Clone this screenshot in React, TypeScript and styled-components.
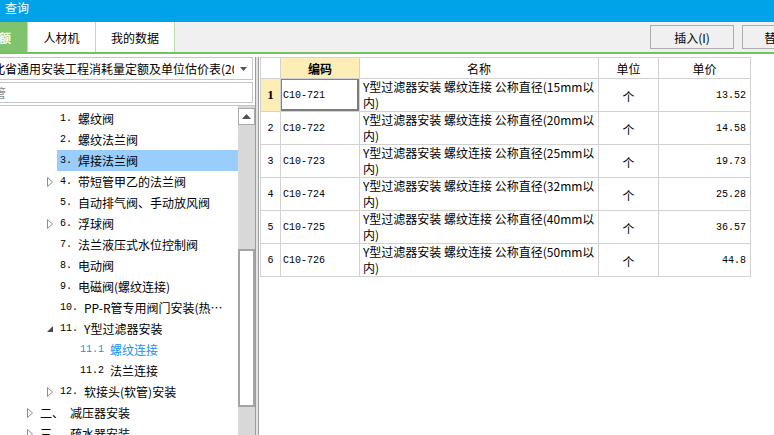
import styled, { createGlobalStyle } from "styled-components";

const GlobalStyle = createGlobalStyle`
  html, body {
    margin: 0;
    padding: 0;
    overflow: hidden;
  }
  body {
    font-family: "Noto Sans CJK SC", "Noto Sans", sans-serif;
    font-size: 12px;
    color: #000;
    background: #fff;
  }
`;

type Toggle = "open" | "closed";

interface TreeItem {
    level: number;
    num: string;
    text: string;
    toggle?: Toggle;
    selected?: boolean;
    active?: boolean;
}

const treeRows: TreeItem[] = [
    { level: 2, num: "1.", text: "螺纹阀" },
    { level: 2, num: "2.", text: "螺纹法兰阀" },
    { level: 2, num: "3.", text: "焊接法兰阀", selected: true },
    { level: 2, num: "4.", text: "带短管甲乙的法兰阀", toggle: "closed" },
    { level: 2, num: "5.", text: "自动排气阀、手动放风阀" },
    { level: 2, num: "6.", text: "浮球阀", toggle: "closed" },
    { level: 2, num: "7.", text: "法兰液压式水位控制阀" },
    { level: 2, num: "8.", text: "电动阀" },
    { level: 2, num: "9.", text: "电磁阀(螺纹连接)" },
    { level: 2, num: "10.", text: "PP-R管专用阀门安装(热熔连接)" },
    { level: 2, num: "11.", text: "Y型过滤器安装", toggle: "open" },
    { level: 3, num: "11.1", text: "螺纹连接", active: true },
    { level: 3, num: "11.2", text: "法兰连接" },
    { level: 2, num: "12.", text: "软接头(软管)安装", toggle: "closed" },
    { level: 1, num: "二、", text: "减压器安装", toggle: "closed" },
    { level: 1, num: "三、", text: "疏水器安装", toggle: "closed" },
];

const quotaRows = [
    { code: "C10-721", size: "15", price: "13.52" },
    { code: "C10-722", size: "20", price: "14.58" },
    { code: "C10-723", size: "25", price: "19.73" },
    { code: "C10-724", size: "32", price: "25.28" },
    { code: "C10-725", size: "40", price: "36.57" },
    { code: "C10-726", size: "50", price: "44.8" },
];

const TreeToggle = ({ state }: { state?: Toggle }) => {
    if (state === "closed") {
        return (
            <svg width="7" height="10" viewBox="0 0 7 10">
                <polygon points="0.5,0.5 5.5,5 0.5,9.5" fill="#fff" stroke="#8e8e8e" strokeWidth="1" />
            </svg>
        );
    }
    if (state === "open") {
        return (
            <svg width="7" height="10" viewBox="0 0 7 10">
                <polygon points="6,2 6,8 0,8" fill="#4a4a4a" />
            </svg>
        );
    }
    return null;
};

const App = () => {
    return (
        <Window>
            <GlobalStyle />
            <TitleBar>查询</TitleBar>

            <Toolbar>
                <Tabs>
                    <Tab $active $width={28}>定额</Tab>
                    <Tab $width={68}>人材机</Tab>
                    <Tab $width={79}>我的数据</Tab>
                </Tabs>
                <Actions>
                    <ActionButton>插入(I)</ActionButton>
                    <ActionButton>替换(R)</ActionButton>
                </Actions>
            </Toolbar>

            <Body>
                <LeftPanel>
                    <Select>
                        <SelectText>湖北省通用安装工程消耗量定额及单位估价表(2013)</SelectText>
                        <SelectArrow>
                            <svg width="7" height="4" viewBox="0 0 7 4">
                                <polygon points="0,0 7,0 3.5,4" fill="#555" />
                            </svg>
                        </SelectArrow>
                    </Select>
                    <SearchBox>
                        <SearchText>管</SearchText>
                    </SearchBox>

                    <TreeView>
                        <TreeList>
                            {treeRows.map((row) => (
                                <TreeRow key={row.num} $level={row.level}>
                                    <ToggleSlot>
                                        <TreeToggle state={row.toggle} />
                                    </ToggleSlot>
                                    <TreeLabel $selected={row.selected} $active={row.active}>
                                        <TreeNum $cjk={/[^\x00-\x7f]/.test(row.num)}>{row.num}</TreeNum>
                                        <TreeText>{row.text}</TreeText>
                                    </TreeLabel>
                                </TreeRow>
                            ))}
                        </TreeList>
                        <ScrollBar>
                            <ScrollButton>
                                <svg width="9" height="5" viewBox="0 0 9 5">
                                    <polygon points="0,5 9,5 4.5,0" fill="#505050" />
                                </svg>
                            </ScrollButton>
                            <ScrollThumb />
                        </ScrollBar>
                    </TreeView>
                </LeftPanel>

                <Splitter />

                <RightPanel>
                    <Grid>
                        <colgroup>
                            <col style={{ width: 20 }} />
                            <col style={{ width: 79 }} />
                            <col style={{ width: 239 }} />
                            <col style={{ width: 60 }} />
                            <col style={{ width: 92 }} />
                        </colgroup>
                        <thead>
                            <tr>
                                <HeadCell />
                                <HeadCell $current>编码</HeadCell>
                                <HeadCell>名称</HeadCell>
                                <HeadCell>单位</HeadCell>
                                <HeadCell>单价</HeadCell>
                            </tr>
                        </thead>
                        <tbody>
                            {quotaRows.map((row, i) => (
                                <tr key={row.code}>
                                    <IndexCell $current={i === 0}>{i + 1}</IndexCell>
                                    <CodeCell $focused={i === 0}>{row.code}</CodeCell>
                                    <NameCell>
                                        <NameLine>Y型过滤器安装 螺纹连接 公称直径({row.size}mm以</NameLine>
                                        <NameLine>内)</NameLine>
                                    </NameCell>
                                    <UnitCell>个</UnitCell>
                                    <PriceCell>{row.price}</PriceCell>
                                </tr>
                            ))}
                        </tbody>
                    </Grid>
                </RightPanel>
            </Body>
        </Window>
    );
};

export default App;

const Window = styled.div`
    width: 774px;
    height: 435px;
    display: flex;
    flex-direction: column;
    overflow: hidden;
`;

const TitleBar = styled.div`
    height: 22px;
    flex-shrink: 0;
    background: #00a2e8;
    color: #fff;
    font-size: 12px;
    line-height: 15px;
    padding-left: 5px;
`;

const Toolbar = styled.div`
    height: 30px;
    flex-shrink: 0;
    display: flex;
    align-items: stretch;
    background: #f0f0f0;
    border-bottom: 2px solid #74c162;
`;

const Tabs = styled.div`
    display: flex;
`;

const Tab = styled.div<{ $active?: boolean; $width: number }>`
    width: ${(p) => p.$width}px;
    display: flex;
    align-items: center;
    justify-content: ${(p) => (p.$active ? "flex-end" : "center")};
    padding-right: ${(p) => (p.$active ? "16px" : "0")};
    overflow: hidden;
    white-space: nowrap;
    box-sizing: border-box;
    background: ${(p) => (p.$active ? "#7fc46c" : "#fff")};
    color: ${(p) => (p.$active ? "#fff" : "#000")};
    font-weight: ${(p) => (p.$active ? 700 : 400)};
    border-right: 1px solid #b9dfac;
`;

const Actions = styled.div`
    margin-left: auto;
    margin-right: -52px;
    display: flex;
    align-items: center;
    gap: 8px;
`;

const ActionButton = styled.div`
    width: 84px;
    height: 24px;
    box-sizing: border-box;
    border: 1px solid #adadad;
    background: #f0f0f0;
    display: flex;
    align-items: center;
    justify-content: center;
`;

const Body = styled.div`
    flex: 1;
    display: flex;
    min-height: 0;
    background: #fff;
`;

const LeftPanel = styled.div`
    width: 255px;
    flex-shrink: 0;
    display: flex;
    flex-direction: column;
    padding-top: 3px;
    overflow: hidden;
`;

const Select = styled.div`
    height: 23px;
    margin-right: 2px;
    box-sizing: border-box;
    border: 1px solid #c6c6c6;
    border-left: none;
    display: flex;
    align-items: center;
    overflow: hidden;
`;

const SelectText = styled.div`
    flex: 1;
    min-width: 0;
    white-space: nowrap;
    overflow: hidden;
    margin-left: -19px;
`;

const SelectArrow = styled.div`
    width: 18px;
    display: flex;
    justify-content: center;
`;

const SearchBox = styled.div`
    height: 21px;
    margin: 2px 2px 0 0;
    box-sizing: border-box;
    border: 1px solid #c6c6c6;
    border-left: none;
    display: flex;
    align-items: center;
    overflow: hidden;
`;

const SearchText = styled.span`
    margin-left: -6px;
    color: #888;
`;

const TreeView = styled.div`
    flex: 1;
    min-height: 0;
    margin-top: 2px;
    border-top: 1px solid #c6c6c6;
    display: flex;
`;

const TreeList = styled.div`
    flex: 1;
    min-width: 0;
    padding-top: 2px;
    overflow: hidden;
`;

const TreeRow = styled.div<{ $level: number }>`
    height: 21px;
    display: flex;
    align-items: stretch;
    padding-left: ${(p) => 24 + (p.$level - 1) * 20}px;
`;

const ToggleSlot = styled.div`
    width: 13px;
    flex-shrink: 0;
    display: flex;
    align-items: center;
    padding-left: 3px;
    box-sizing: border-box;
`;

const TreeLabel = styled.div<{ $selected?: boolean; $active?: boolean }>`
    flex: 1;
    min-width: 0;
    display: flex;
    align-items: center;
    padding: 0 4px 0 3px;
    white-space: nowrap;
    background: ${(p) => (p.$selected ? "#99cdfb" : "transparent")};
    color: ${(p) => (p.$active ? "#1a8ff0" : "#000")};
`;

const TreeNum = styled.span<{ $cjk?: boolean }>`
    flex-shrink: 0;
    margin-right: 6px;
    font-family: ${(p) => (p.$cjk ? `"Noto Sans CJK SC", sans-serif` : `"Liberation Mono", monospace`)};
    font-size: ${(p) => (p.$cjk ? "12px" : "10px")};
`;

const TreeText = styled.span`
    min-width: 0;
    overflow: hidden;
    text-overflow: ellipsis;
`;

const ScrollBar = styled.div`
    width: 17px;
    flex-shrink: 0;
    padding-top: 2px;
    background: #d8d8d8;
    display: flex;
    flex-direction: column;
`;

const ScrollButton = styled.div`
    height: 17px;
    box-sizing: border-box;
    border: 1px solid #a8a8a8;
    background: #fff;
    display: flex;
    align-items: center;
    justify-content: center;
`;

const ScrollThumb = styled.div`
    height: 158px;
    margin-top: 124px;
    box-sizing: border-box;
    border: 2px solid #a4a4a4;
    background: #fff;
`;

const Splitter = styled.div`
    width: 2px;
    flex-shrink: 0;
    margin-top: 3px;
    background: #e4e4e4;
    border-left: 1px solid #9c9c9c;
    border-right: 1px solid #9c9c9c;
`;

const RightPanel = styled.div`
    flex: 1;
    padding: 3px 0 0 1px;
    overflow: hidden;
`;

const Grid = styled.table`
    width: 490px;
    table-layout: fixed;
    border-collapse: collapse;
    border-top: 1px solid #a8a8a8;

    td, th {
        border: 1px solid #d2d2d2;
        padding: 0;
        overflow: hidden;
        white-space: nowrap;
    }
`;

const HeadCell = styled.th<{ $current?: boolean }>`
    height: 20px;
    text-align: center;
    font-weight: ${(p) => (p.$current ? 700 : 400)};
    background: ${(p) => (p.$current ? "#fdeeb7" : "#fff")};
`;

const IndexCell = styled.td<{ $current?: boolean }>`
    height: 32px;
    text-align: center;
    font-family: ${(p) => (p.$current ? `"Liberation Serif", serif` : `"Liberation Mono", monospace`)};
    font-size: ${(p) => (p.$current ? "13px" : "10px")};
    font-weight: ${(p) => (p.$current ? 700 : 400)};
    background: ${(p) => (p.$current ? "#fdeeb7" : "#fff")};
`;

const CodeCell = styled.td<{ $focused?: boolean }>`
    padding-left: 2px !important;
    font-family: "Liberation Mono", monospace;
    font-size: 10px;
    box-shadow: ${(p) => (p.$focused ? "inset 1px 1px 0 #2e9be6, inset -2px -2px 0 #7c7c7c" : "none")};
`;

const NameCell = styled.td`
    padding: 0 3px !important;
    line-height: 16px;
`;

const NameLine = styled.span`
    display: block;
    overflow: hidden;
`;

const UnitCell = styled.td`
    text-align: center;
    padding-top: 3px !important;
`;

const PriceCell = styled.td`
    text-align: right;
    padding-right: 4px !important;
    font-family: "Liberation Mono", monospace;
    font-size: 10px;
`;
